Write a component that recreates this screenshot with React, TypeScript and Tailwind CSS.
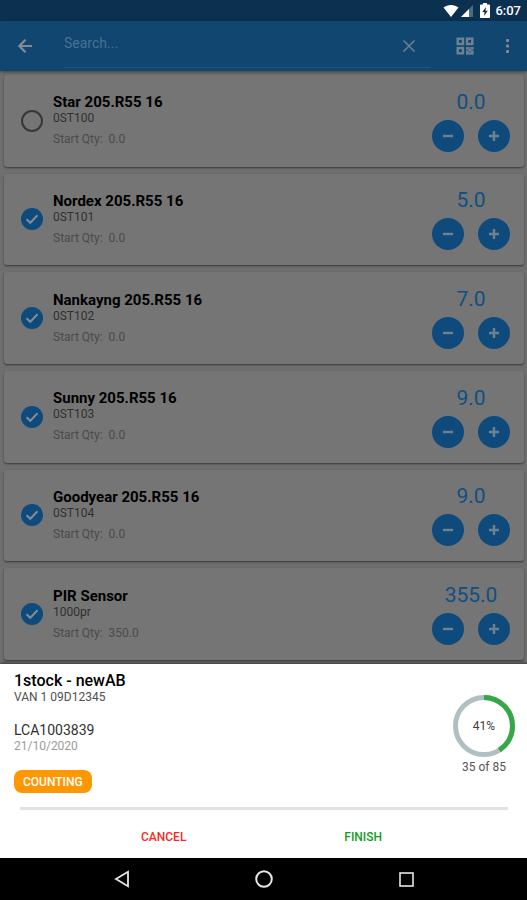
import { useState } from "react";

type Item = { name: string; code: string; start: string; qty: number; counted: boolean };

const initialItems: Item[] = [
  { name: "Star 205.R55 16", code: "0ST100", start: "0.0", qty: 0, counted: false },
  { name: "Nordex 205.R55 16", code: "0ST101", start: "0.0", qty: 5, counted: true },
  { name: "Nankayng 205.R55 16", code: "0ST102", start: "0.0", qty: 7, counted: true },
  { name: "Sunny 205.R55 16", code: "0ST103", start: "0.0", qty: 9, counted: true },
  { name: "Goodyear 205.R55 16", code: "0ST104", start: "0.0", qty: 9, counted: true },
  { name: "PIR Sensor", code: "1000pr", start: "350.0", qty: 355, counted: true },
];

function StatusBar() {
  return (
    <div className="flex h-[21px] shrink-0 items-center justify-end bg-[#0c3050] pr-1.5 text-white">
      <svg className="mr-0.5 h-3 w-4" viewBox="0 0 16 12" fill="currentColor" aria-hidden="true">
        <path d="M8 12 .5 2.6C2.6 1 5.2 0 8 0s5.4 1 7.5 2.6z" />
      </svg>
      <svg className="mr-[7px] h-3 w-3" viewBox="0 0 12 12" aria-hidden="true">
        <path d="M12 0v12H0z" fill="#4b6a84" />
        <path d="M8 4v8H0z" fill="#fff" />
      </svg>
      <svg className="mr-[5px] h-[15px] w-2.5" viewBox="0 0 10 15" aria-hidden="true">
        <path d="M3 0h4v1.5h2.2a.8.8 0 0 1 .8.8v11.9a.8.8 0 0 1-.8.8H.8a.8.8 0 0 1-.8-.8V2.3a.8.8 0 0 1 .8-.8H3z" fill="#fff" />
        <path d="M6 4 2.3 9h2.2L4 13l3.8-5.3H5.5z" fill="#0c3050" />
      </svg>
      <span className="text-[13px] font-medium leading-4">6:07</span>
    </div>
  );
}

function AppBar() {
  return (
    <header className="relative flex h-[50px] shrink-0 items-center bg-[#10466f] text-[#858b90] shadow-[0_1px_3px_rgba(0,0,0,0.45)]">
      <button type="button" aria-label="Back" className="flex w-16 shrink-0 items-center pl-[18px]">
        <svg className="h-3.5 w-3.5" viewBox="0 0 14 14" fill="none" stroke="currentColor" strokeWidth="2.2" aria-hidden="true">
          <path d="M14 7H1.5M7.5.8 1.4 7l6.1 6.2" />
        </svg>
      </button>
      <div className="mb-[3px] flex min-w-0 flex-1 items-center self-stretch border-b border-[#23527a]">
        <input
          type="text"
          aria-label="Search"
          placeholder="Search..."
          className="min-w-0 flex-1 bg-transparent pb-0.5 text-sm leading-5 outline-none placeholder:text-[#4a7191]"
        />
        <button type="button" aria-label="Clear search" className="mr-[15px] flex pt-1">
          <svg className="h-3 w-3" viewBox="0 0 12 12" fill="none" stroke="#6f8192" strokeWidth="1.5" aria-hidden="true">
            <path d="m.5.5 11 11m0-11-11 11" />
          </svg>
        </button>
      </div>
      <button type="button" aria-label="Scan code" className="ml-[26px] text-[#6f8192]">
        <svg className="h-[18px] w-[18px]" viewBox="0 0 18 18" aria-hidden="true">
          <g fill="none" stroke="currentColor" strokeWidth="2.4">
            <rect x="1.7" y="1.7" width="5.3" height="5.3" />
            <rect x="11" y="1.7" width="5.3" height="5.3" />
            <rect x="1.7" y="11" width="5.3" height="5.3" />
          </g>
          <path fill="currentColor" d="M10 10h2.5v2H10zM12.500 12H15v2h-2.500zM15 10h2.500v2H15zM10 14h2.500v3.500H10zM15 14h2.500v3.500H15zM12.500 16H15v1.500h-2.500z" />
          <path fill="currentColor" opacity="0.6" d="M10 10h7.500v7.500H10z" />
        </svg>
      </button>
      <button type="button" aria-label="More options" className="ml-8 mr-[18px]">
        <svg className="h-4 w-[3px]" viewBox="0 0 3 16" fill="currentColor" aria-hidden="true">
          <rect y="1" width="3" height="3" rx="1" />
          <rect y="6.5" width="3" height="3" rx="1" />
          <rect y="12" width="3" height="3" rx="1" />
        </svg>
      </button>
    </header>
  );
}

function RoundButton({ label, path, onClick }: { label: string; path: string; onClick: () => void }) {
  return (
    <button
      type="button"
      aria-label={label}
      onClick={onClick}
      className="flex size-8 items-center justify-center rounded-full bg-[#0e4b7c] text-[#71808d]"
    >
      <svg className="size-2.5" viewBox="0 0 10 10" fill="none" stroke="currentColor" strokeWidth="2.4" aria-hidden="true">
        <path d={path} />
      </svg>
    </button>
  );
}

function ItemCard({ item, onToggle, onStep }: { item: Item; onToggle: () => void; onStep: (by: number) => void }) {
  return (
    <li className="flex items-center rounded-[3px] bg-[#757575] pl-[17px] pr-3.5 shadow-[0_1px_2px_rgba(0,0,0,0.5)]">
      <label className="relative flex size-[22px] shrink-0">
        <input
          type="checkbox"
          checked={item.counted}
          onChange={onToggle}
          aria-label={item.name}
          className="size-[22px] appearance-none rounded-full border-2 border-[#373737] checked:border-0 checked:bg-[#0e4b7c]"
        />
        {item.counted && (
          <svg className="pointer-events-none absolute inset-0 size-[22px]" viewBox="0 0 22 22" fill="none" stroke="#848c93" strokeWidth="2" aria-hidden="true">
            <path d="m5.5 11.2 3.8 3.6 7.2-7.600" />
          </svg>
        )}
      </label>
      <div className="ml-2.5 min-w-0 flex-1">
        <h2 className="truncate text-[15px] font-bold leading-4 text-black">{item.name}</h2>
        <p className="text-xs leading-4 text-[#303030]">{item.code}</p>
        <p className="mt-[5px] whitespace-pre text-xs leading-4 text-[#4b4b4b]">{"Start Qty:  " + item.start}</p>
      </div>
      <div className="flex flex-col items-center">
        <output className="text-[21px] leading-6 text-[#104f82]">{item.qty.toFixed(1)}</output>
        <div className="mt-1.5 flex gap-3.5">
          <RoundButton label="Decrease" path="M0 5h10" onClick={() => onStep(-1)} />
          <RoundButton label="Increase" path="M0 5h10M5 0v10" onClick={() => onStep(1)} />
        </div>
      </div>
    </li>
  );
}

function CountSheet() {
  return (
    <section className="relative shrink-0 bg-white shadow-[0_-1px_3px_rgba(0,0,0,0.5)]">
      <div className="flex items-start justify-between pl-3.5 pr-3 pt-[9px]">
        <div>
          <h1 className="text-base font-medium leading-4 text-black">1stock - newAB</h1>
          <p className="text-xs leading-4 text-[#505050]">VAN 1 09D12345</p>
          <p className="mt-[17px] text-sm leading-4 text-[#303030]">LCA1003839</p>
          <p className="text-xs leading-4 text-[#9a9a9a]">21/10/2020</p>
          <span className="mt-4 inline-flex h-[23px] items-center rounded-lg bg-[#ff9800] px-[9px] text-xs font-medium text-white">COUNTING</span>
        </div>
        <div className="mt-[22px] flex flex-col items-center">
          <div className="relative flex size-[62px] items-center justify-center">
            <svg className="absolute inset-0 size-[62px]" viewBox="0 0 62 62" fill="none" strokeWidth="5" aria-hidden="true">
              <circle cx="31" cy="31" r="28.5" stroke="#b0bfc2" />
              <circle cx="31" cy="31" r="28.5" stroke="#35a845" pathLength="100" strokeDasharray="41 59" transform="rotate(-90 31 31)" />
            </svg>
            <span className="text-xs leading-4 text-[#404040]">41%</span>
          </div>
          <p className="mt-0.5 text-xs leading-4 text-[#555555]">35 of 85</p>
        </div>
      </div>
      <hr className="ml-5 mr-[19px] mt-3.5 h-[3px] border-0 bg-[#e2e2e2]" />
      <div className="flex h-12 items-center justify-around pl-[62px] pr-[66px] pt-1.5 text-xs font-medium">
        <button type="button" className="text-[#f52a24]">CANCEL</button>
        <button type="button" className="text-[#149c22]">FINISH</button>
      </div>
    </section>
  );
}

function NavBar() {
  return (
    <nav className="flex h-[42px] shrink-0 items-center justify-center bg-black text-[#e6e6e6]">
      <button type="button" aria-label="Back">
        <svg className="h-[18px] w-4" viewBox="0 0 16 18" fill="none" stroke="currentColor" strokeWidth="1.8" aria-hidden="true">
          <path d="M14 1.8v14.4L2 9z" />
        </svg>
      </button>
      <button type="button" aria-label="Home" className="mx-[125px]">
        <svg className="size-[18px]" viewBox="0 0 18 18" fill="none" stroke="currentColor" strokeWidth="2" aria-hidden="true">
          <circle cx="9" cy="9" r="7.8" />
        </svg>
      </button>
      <button type="button" aria-label="Overview">
        <svg className="size-4" viewBox="0 0 16 16" fill="none" stroke="currentColor" strokeWidth="1.6" aria-hidden="true">
          <rect x="2" y="2" width="13" height="13" />
        </svg>
      </button>
    </nav>
  );
}

export default function App() {
  const [items, setItems] = useState(initialItems);
  const update = (index: number, change: (item: Item) => Item) =>
    setItems(items.map((item, i) => (i === index ? change(item) : item)));

  return (
    <div className="flex h-screen flex-col bg-[#6f6f6f] font-[Roboto,sans-serif]">
      <StatusBar />
      <AppBar />
      <main className="flex min-h-0 flex-1 flex-col overflow-hidden">
        <ul className="grid flex-1 auto-rows-[minmax(91px,1fr)] gap-[7px] py-1 pl-1 pr-[3px]">
          {items.map((item, i) => (
            <ItemCard
              key={item.code}
              item={item}
              onToggle={() => update(i, (it) => ({ ...it, counted: !it.counted }))}
              onStep={(by) => update(i, (it) => ({ ...it, qty: Math.max(0, it.qty + by) }))}
            />
          ))}
        </ul>
      </main>
      <CountSheet />
      <NavBar />
    </div>
  );
}
